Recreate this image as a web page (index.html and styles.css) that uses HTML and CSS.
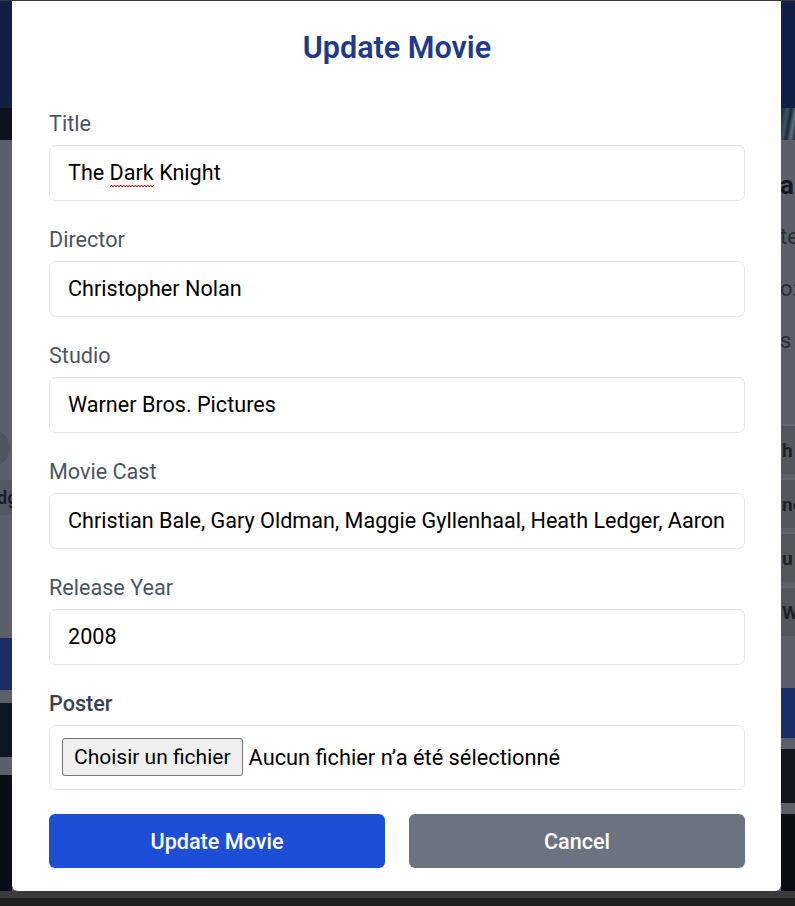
FILE: index.html
```html
<!DOCTYPE html>
<html lang="fr">
<head>
<meta charset="utf-8">
<title>Update Movie</title>
<link rel="stylesheet" href="styles.css">
</head>
<body>
<div class="page">
  <div class="topline"></div>
  <header class="header"></header>
  <div class="hero">
    <div class="hero-left"></div>
    <div class="hero-mid"></div>
    <div class="hero-right"></div>
  </div>
  <main class="main">
    <div class="strip strip-left">
      <div class="sp sp-a"></div>
      <div class="avatar-row"><span class="avatar"></span></div>
      <div class="sp sp-b"></div>
      <div class="l-band"><span class="bg-bold">dg</span></div>
      <div class="sp sp-c"></div>
      <div class="l-navy"></div>
      <div class="sp sp-d"></div>
      <div class="l-dark"></div>
      <div class="sp sp-e"></div>
      <div class="l-darkest"></div>
    </div>
    <div class="mid"></div>
    <div class="strip strip-right">
      <div class="r-text">
        <span class="r-h">a</span>
        <span class="r-p">te</span>
        <span class="r-p">o:</span>
        <span class="r-p">s</span>
      </div>
      <div class="r-rows">
        <div class="r-row">h</div>
        <div class="r-row">ne</div>
        <div class="r-row">u</div>
        <div class="r-row">W</div>
      </div>
      <div class="r-gap"></div>
      <div class="r-navy"></div>
      <div class="r-sep"></div>
      <div class="r-dark"></div>
      <div class="r-sep"></div>
      <div class="r-darkest"></div>
    </div>
  </main>
  <div class="bottom-a"></div>
  <div class="bottom-b"></div>

  <div class="modal">
    <h2 class="modal-title">Update Movie</h2>
    <form class="form">
      <div class="group">
        <label class="label">Title</label>
        <div class="input"><span class="val">The <span class="typo">Dark</span> Knight</span></div>
      </div>
      <div class="group">
        <label class="label">Director</label>
        <div class="input"><span class="val">Christopher Nolan</span></div>
      </div>
      <div class="group">
        <label class="label">Studio</label>
        <div class="input"><span class="val">Warner Bros. Pictures</span></div>
      </div>
      <div class="group">
        <label class="label">Movie Cast</label>
        <div class="input"><span class="val">Christian Bale, Gary Oldman, Maggie Gyllenhaal, Heath Ledger, Aaron Eckhart, Michael Caine</span></div>
      </div>
      <div class="group">
        <label class="label">Release Year</label>
        <div class="input"><span class="val">2008</span></div>
      </div>
      <div class="group">
        <label class="label label-strong">Poster</label>
        <div class="file-box">
          <span class="file-btn">Choisir un fichier</span>
          <span class="file-name">Aucun fichier n’a été sélectionné</span>
        </div>
      </div>
      <div class="actions">
        <button type="button" class="btn btn-primary">Update Movie</button>
        <button type="button" class="btn btn-secondary">Cancel</button>
      </div>
    </form>
  </div>
</div>
</body>
</html>
```

FILE: styles.css
```css
* { box-sizing: border-box; }
html, body { margin: 0; padding: 0; }
body {
  width: 795px;
  height: 906px;
  overflow: hidden;
  font-family: Roboto, "Noto Sans", "Liberation Sans", sans-serif;
  background: #5c5f69;
}
.page {
  position: relative;
  width: 795px;
  height: 906px;
  display: flex;
  flex-direction: column;
}
.topline { height: 1px; background: #3a3a3a; }
.header { height: 107px; background: #121e45; }
.hero {
  height: 32px;
  display: grid;
  grid-template-columns: 12px 1fr 14px;
}
.hero-left { background: #0f121b; }
.hero-mid { background: #0f121b; }
.hero-right {
  background: linear-gradient(100deg, #1a2a3d 0%, #3d5366 35%, #1b2738 55%, #5b7183 75%, #1c2a3c 100%);
}
.main {
  height: 751px;
  display: grid;
  grid-template-columns: 12px 1fr 14px;
  background: #5c5f69;
}
.mid { background: #5c5f69; }
.strip { display: flex; flex-direction: column; overflow: hidden; }

/* left strip (y origin 140) */
.sp-a { height: 290px; }
.avatar-row { height: 36px; position: relative; }
.avatar {
  display: block;
  width: 36px; height: 36px;
  margin-left: -26px;
  border-radius: 50%;
  background: #51545d;
}
.sp-b { height: 14px; }
.l-band {
  height: 35px;
  background: #54575f;
  display: flex;
  align-items: center;
}
.bg-bold {
  font-weight: 700;
  font-size: 18px;
  color: #1c2029;
  margin-left: -3px;
  white-space: nowrap;
}
.sp-c { height: 123px; }
.l-navy { height: 52px; background: #1b2d66; }
.sp-d { height: 13px; }
.l-dark { height: 54px; background: #11151e; }
.sp-e { height: 18px; }
.l-darkest { flex: 1; background: #0a0d14; }

/* right strip */
.r-text {
  height: 284px;
  display: flex;
  flex-direction: column;
  padding-top: 30px;
  white-space: nowrap;
}
.r-h {
  font-weight: 700;
  font-size: 26px;
  line-height: 30px;
  color: #15181f;
  margin-left: -1px;
  margin-bottom: 22px;
}
.r-p {
  font-size: 22px;
  line-height: 30px;
  color: #2a2e37;
  margin-left: -1px;
  margin-bottom: 22px;
}
.r-rows { display: flex; flex-direction: column; gap: 4px; }
.r-row {
  height: 50px;
  background: #53565f;
  font-weight: 700;
  font-size: 19px;
  color: #1b1f28;
  display: flex;
  align-items: center;
  white-space: nowrap;
  padding-left: 1px;
  border-top: 2px solid #62656e;
}
.r-gap { height: 52px; }
.r-navy { height: 50px; background: #1b2d66; }
.r-sep { height: 11px; background: #5c5f69; }
.r-dark { height: 54px; background: #11151e; }
.r-darkest { flex: 1; background: #0a0d14; }

.bottom-a { height: 7px; background: #3b3b3b; }
.bottom-b { height: 8px; background: #1f1f1f; }

/* modal */
.modal {
  position: absolute;
  left: 12px;
  top: 1px;
  width: 769px;
  height: 890px;
  background: #ffffff;
  border-radius: 0 0 6px 6px;
  padding: 29px 36px 23px 37px;
}
.modal-title {
  margin: 0 0 44px;
  text-align: center;
  font-size: 30.5px;
  line-height: 36px;
  font-weight: 600;
  color: #1e3a8a;
}
.form { display: flex; flex-direction: column; }
.group { display: flex; flex-direction: column; margin-bottom: 25px; }
.group:nth-child(6) { margin-bottom: 24px; }
.label {
  font-size: 21.6px;
  line-height: 28px;
  color: #4b5563;
  margin-bottom: 7px;
}
.label-strong { font-weight: 500; color: #374151; }
.input {
  height: 56px;
  border: 1px solid #e5e7eb;
  border-radius: 7px;
  padding: 0 18px;
  display: flex;
  align-items: center;
  font-size: 21.6px;
  color: #000;
}
.val {
  display: block;
  width: 100%;
  overflow: hidden;
  white-space: nowrap;
  line-height: 28px;
}
.typo {
  padding-bottom: 3px;
  background-image: url("data:image/svg+xml,%3Csvg xmlns='http://www.w3.org/2000/svg' width='6' height='4'%3E%3Cpath d='M0 3 L1.5 1 L3 3 L4.5 1 L6 3' fill='none' stroke='%23e00000' stroke-width='1'/%3E%3C/svg%3E");
  background-repeat: repeat-x;
  background-position: 0 100%;
  background-size: 6px 4px;
}
.file-box {
  height: 65px;
  border: 1px solid #e5e7eb;
  border-radius: 7px;
  padding: 12px 12px 13px;
  display: flex;
  align-items: center;
  font-size: 21.8px;
  color: #000;
}
.file-btn {
  height: 38px;
  display: flex;
  align-items: center;
  padding: 0 11px;
  background: #efefef;
  border: 1px solid #767676;
  border-radius: 3px;
  white-space: nowrap;
  font-size: 21px;
}
.file-name { margin-left: 6px; white-space: nowrap; }
.actions {
  display: grid;
  grid-template-columns: 1fr 1fr;
  gap: 24px;
}
.btn {
  height: 54px;
  border: 0;
  border-radius: 6px;
  font-family: Roboto, "Noto Sans", "Liberation Sans", sans-serif;
  font-size: 21.6px;
  font-weight: 500;
  color: #fff;
}
.btn-primary { background: #1d4ed8; }
.btn-secondary { background: #6b7280; }
```
